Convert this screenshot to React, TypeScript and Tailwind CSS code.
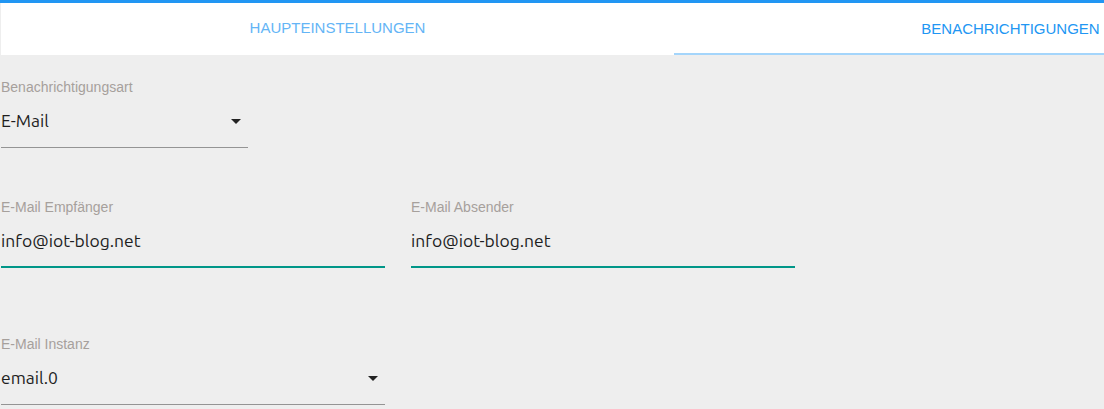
import React from "react";

const Arrow = () => (
  <svg width="10" height="5" viewBox="0 0 10 5" className="block">
    <path d="M0 0 L10 0 L5 5 Z" fill="#222" />
  </svg>
);

function Field({
  label,
  value,
  width,
  select,
  focused,
  className,
}: {
  label: string;
  value: string;
  width: string;
  select?: boolean;
  focused?: boolean;
  className?: string;
}) {
  return (
    <div className={`${width} ${className ?? ""}`}>
      <div className="h-[16px] text-[14px] leading-[16px] text-[#a6a09c] font-['Liberation_Sans',Arial,sans-serif] whitespace-nowrap">
        {label}
      </div>
      <div
        className={`mt-[14px] flex h-[24px] items-center justify-between pr-[7px] pb-0 ${
          focused ? "mb-[13px]" : "mb-[14px]"
        }`}
      >
        <span className="text-[17.5px] leading-[24px] text-[#1e1e1e] font-['Ubuntu','Noto_Sans',sans-serif]">
          {value}
        </span>
        {select && <Arrow />}
      </div>
      <div
        className={
          focused ? "h-[2px] bg-[#009688]" : "h-px bg-[#949494]"
        }
      />
    </div>
  );
}

export default function App() {
  return (
    <div className="h-[409px] w-[1104px] overflow-hidden bg-[#eeeeee]">
      <div className="h-[3px] bg-[#2196f3]" />
      <div className="flex h-[52px] overflow-hidden">
        <div className="w-px shrink-0 bg-[#eeeeee]" />
        <div className="flex w-[673px] shrink-0 items-center justify-center bg-white pb-[1px]">
          <span className="text-[15px] text-[#64b5f6] font-['Liberation_Sans',Arial,sans-serif]">
            HAUPTEINSTELLUNGEN
          </span>
        </div>
        <div className="flex w-[673px] shrink-0 flex-col bg-white">
          <div className="flex flex-1 items-center justify-center pt-[2px]">
            <span className="text-[15px] text-[#2196f3] font-['Liberation_Sans',Arial,sans-serif]">
              BENACHRICHTIGUNGEN
            </span>
          </div>
          <div className="h-[2px] bg-[#a4d5fb]" />
        </div>
      </div>
      <div className="pl-px">
        <Field
          className="mt-[24px]"
          width="w-[247px]"
          label="Benachrichtigungsart"
          value="E-Mail"
          select
        />
        <div className="mt-[51px] flex gap-[26px]">
          <Field
            width="w-[384px]"
            label="E-Mail Empfänger"
            value="info@iot-blog.net"
            focused
          />
          <Field
            width="w-[384px]"
            label="E-Mail Absender"
            value="info@iot-blog.net"
            focused
          />
        </div>
        <Field
          className="mt-[68px]"
          width="w-[384px]"
          label="E-Mail Instanz"
          value="email.0"
          select
        />
      </div>
    </div>
  );
}
